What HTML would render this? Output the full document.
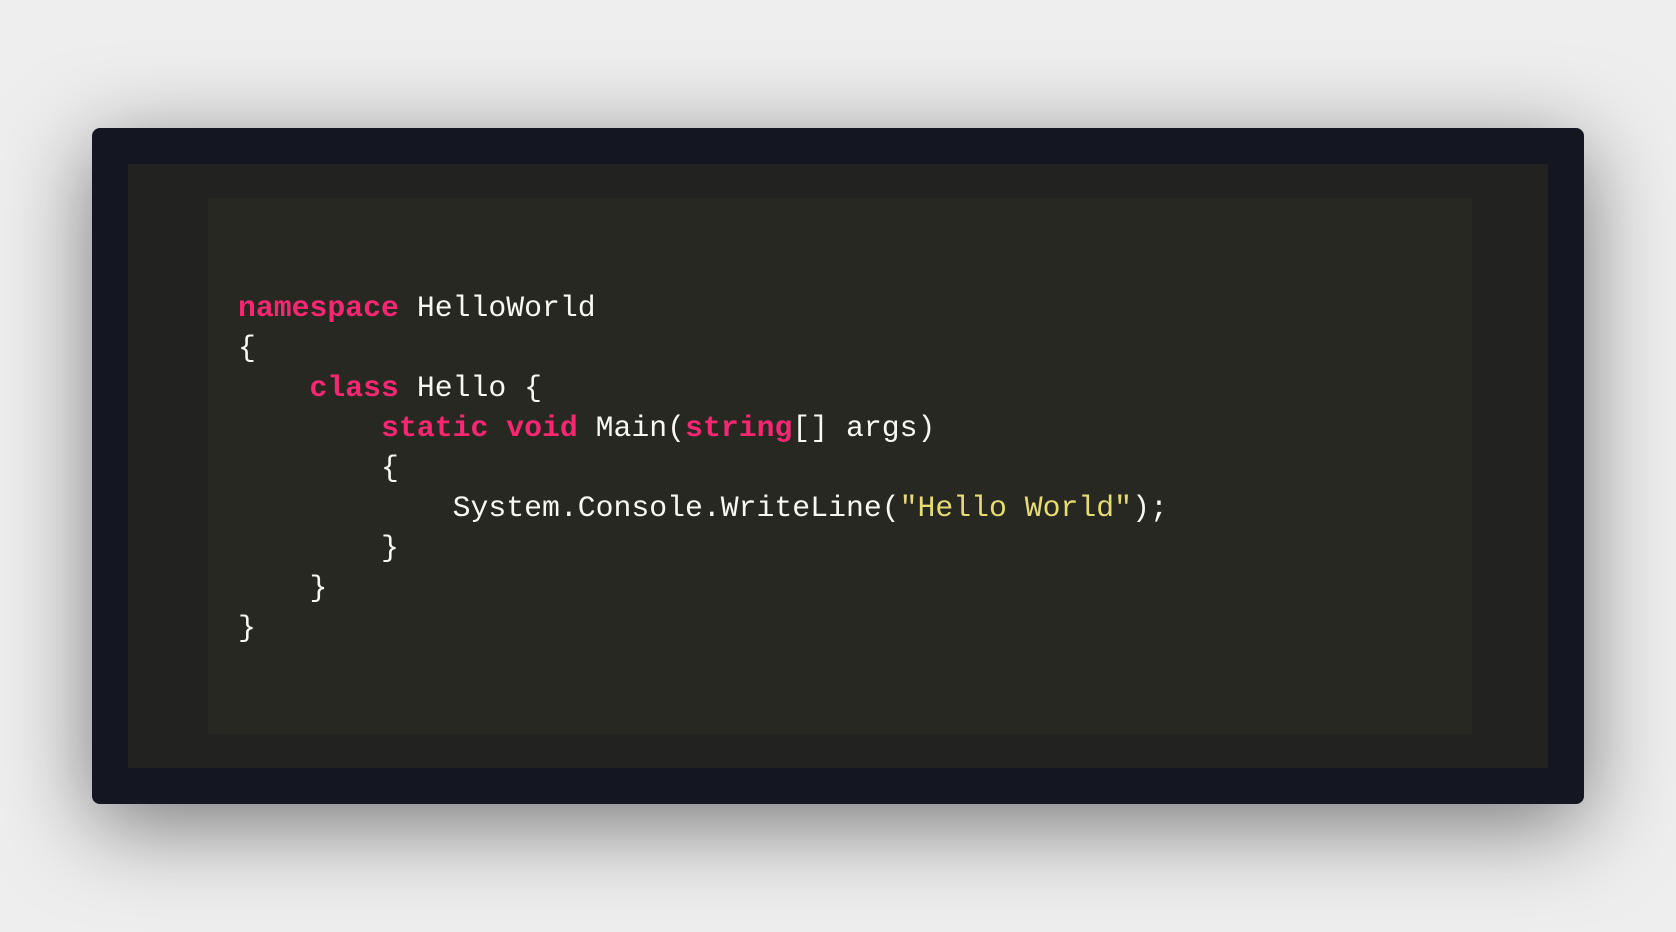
<!DOCTYPE html>
<html><head><style>
html,body{margin:0;padding:0;width:1676px;height:932px;overflow:hidden;background:#eeeeee;}
.outer{position:absolute;left:92px;top:128px;width:1492px;height:676px;background:#141722;border-radius:8px;box-shadow:0 20px 90px rgba(0,0,0,0.5);}
.inner{position:absolute;left:36px;top:36px;width:1420px;height:604px;background:#222220;}
.code{position:absolute;left:80px;top:34px;width:1264px;height:536px;background:#282823;}
pre{position:absolute;left:30px;top:90px;margin:0;font-family:"Liberation Mono",monospace;font-size:29.8px;line-height:40px;color:#f8f8f2;}
.k{color:#f92672;font-weight:bold;}
.s{color:#e6db74;}
</style></head><body>
<div class="outer"><div class="inner"><div class="code"><pre><span class="k">namespace</span> HelloWorld
{
    <span class="k">class</span> Hello {
        <span class="k">static</span> <span class="k">void</span> Main(<span class="k">string</span>[] args)
        {
            System.Console.WriteLine(<span class="s">"Hello World"</span>);
        }
    }
}</pre></div></div></div>
</body></html>
